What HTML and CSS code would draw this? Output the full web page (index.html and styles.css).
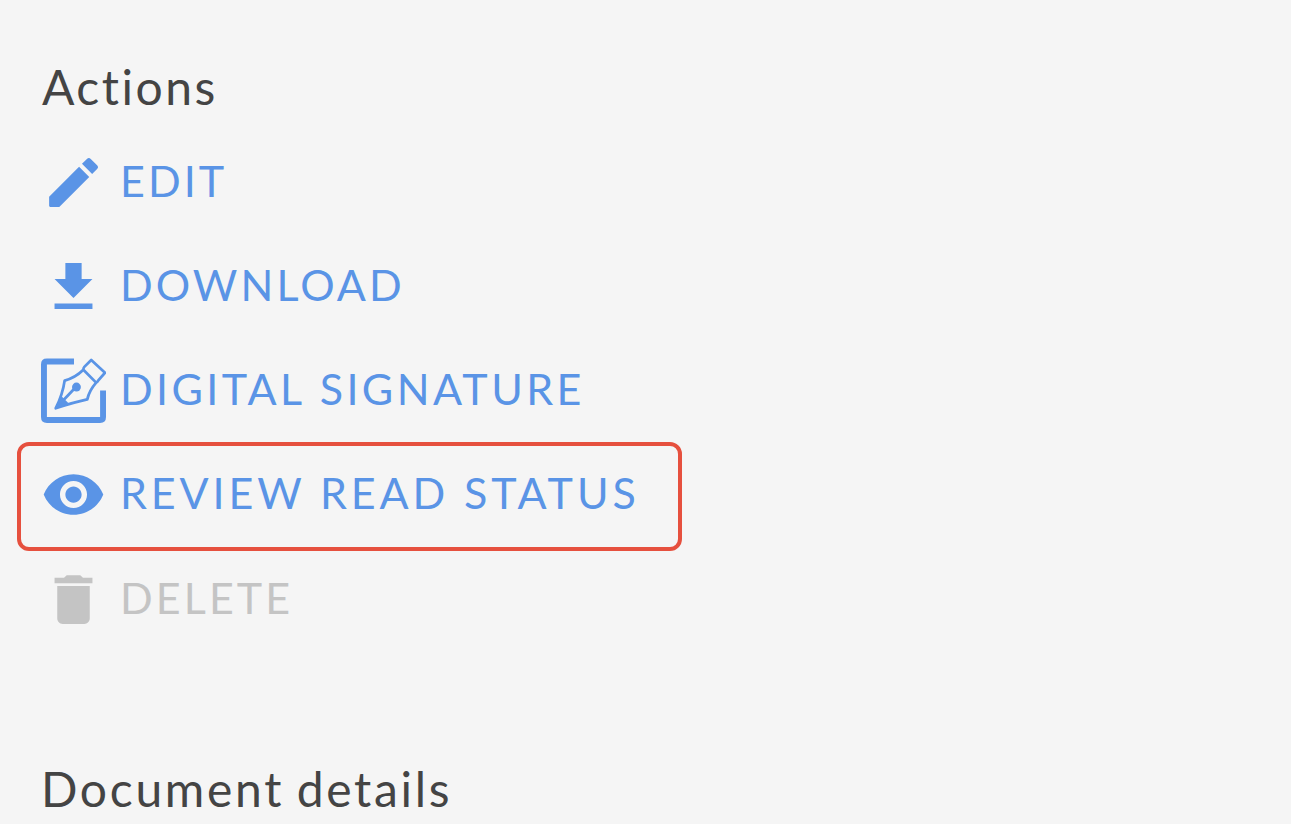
FILE: index.html
```html
<!DOCTYPE html>
<html lang="en">
<head>
<meta charset="utf-8">
<title>Document actions</title>
<link rel="stylesheet" href="styles.css">
</head>
<body>
<main class="panel">
  <h2 class="heading heading-actions"><span>Actions</span></h2>
  <ul class="actions">
    <li class="action">
      <svg class="icon" viewBox="0 0 24 24"><path d="M3 17.25V20.600Q3 21 3.400 21H6.750L17.810 9.940l-3.750-3.750L3 17.250zM20.710 7.040a1 1 0 0 0 0-1.410l-2.340-2.340a1 1 0 0 0-1.410 0l-1.830 1.830 3.750 3.750 1.830-1.830z"/></svg>
      <span class="label label-edit">EDIT</span>
    </li>
    <li class="action">
      <svg class="icon" viewBox="0 0 24 24"><path d="M19 9.200h-4V3.300H9v5.900H5l7 7 7-7zM5 18.300v2h14v-2H5z"/></svg>
      <span class="label label-download">DOWNLOAD</span>
    </li>
    <li class="action">
      <svg class="icon icon-sign" viewBox="0 0 66 66"><g fill="none" stroke="currentColor" stroke-linejoin="round"><path stroke-width="6" d="M33.500 3.500H6Q3 3.500 3 6.500V60Q3 63 6 63H60Q63 63 63 60V33"/><path stroke-width="2.800" d="M15 51Q22 37 24 23Q35 20 43 12L56 25Q49 33 47 42Q33 45 15 51ZM43 12Q43 10 44 9L51 2 65 15 58 23Q57 25 56 25M15 51L34 31"/></g><circle cx="36" cy="29.500" r="4.500"/><path d="M14 52L20 38 28 46Z"/></svg>
      <span class="label label-sign">DIGITAL SIGNATURE</span>
    </li>
    <li class="action action-highlight">
      <svg class="icon" viewBox="0 0 24 24"><path d="M12 4.500C7 4.500 2.730 7.610 1 12c1.730 4.390 6 7.500 11 7.500s9.270-3.110 11-7.500c-1.730-4.390-6-7.500-11-7.500zM12 17c-2.760 0-5-2.240-5-5s2.240-5 5-5 5 2.240 5 5-2.240 5-5 5zm0-8c-1.660 0-3 1.340-3 3s1.340 3 3 3 3-1.340 3-3-1.340-3-3-3z"/></svg>
      <span class="label label-review">REVIEW READ STATUS</span>
    </li>
    <li class="action action-disabled">
      <svg class="icon" viewBox="0 0 24 24"><path d="M6 19c0 1.100.9 2 2 2h8c1.100 0 2-.9 2-2V7H6v12zM19 4h-3.500l-1-1h-5l-1 1H5v2h14V4z"/></svg>
      <span class="label label-delete">DELETE</span>
    </li>
  </ul>
  <h2 class="heading heading-details"><span>Document details</span></h2>
</main>
</body>
</html>
```

FILE: styles.css
```css
body {
  margin: 0;
  background: #f5f5f5;
  font-family: Lato, "Open Sans", sans-serif;
  overflow: hidden;
}

.panel {
  padding: 57px 41px 0;
}

.heading {
  margin: 0;
  height: 60px;
  line-height: 60px;
  font-size: 48px;
  font-weight: 400;
  color: #444;
  white-space: nowrap;
}

.heading-actions {
  padding-left: 1px;
  letter-spacing: 2.5px;
}

.heading-details {
  margin-top: 108px;
  letter-spacing: 2.7px;
  word-spacing: -2.5px;
}

.actions {
  list-style: none;
  margin: 13.5px 0 0;
  padding: 0;
}

.action {
  position: relative;
  display: flex;
  align-items: center;
  gap: 14px;
  height: 104.15px;
  color: #5a94e6;
}

.action-disabled { color: #c4c4c4; }

.action-highlight::after {
  content: "";
  position: absolute;
  left: -24px;
  top: -1px;
  width: 657px;
  height: 101px;
  border: 4px solid #e6503e;
  border-radius: 12px;
}

.icon {
  width: 65px;
  height: 65px;
  flex: none;
  fill: currentColor;
}

.label {
  font-size: 43px;
  line-height: 60px;
  padding-bottom: 3px;
  letter-spacing: 3.1px;
  white-space: nowrap;
}

.label-sign {
  letter-spacing: 3.4px;
  word-spacing: 1px;
}

.label-review {
  letter-spacing: 3.9px;
  word-spacing: 0;
}
```
